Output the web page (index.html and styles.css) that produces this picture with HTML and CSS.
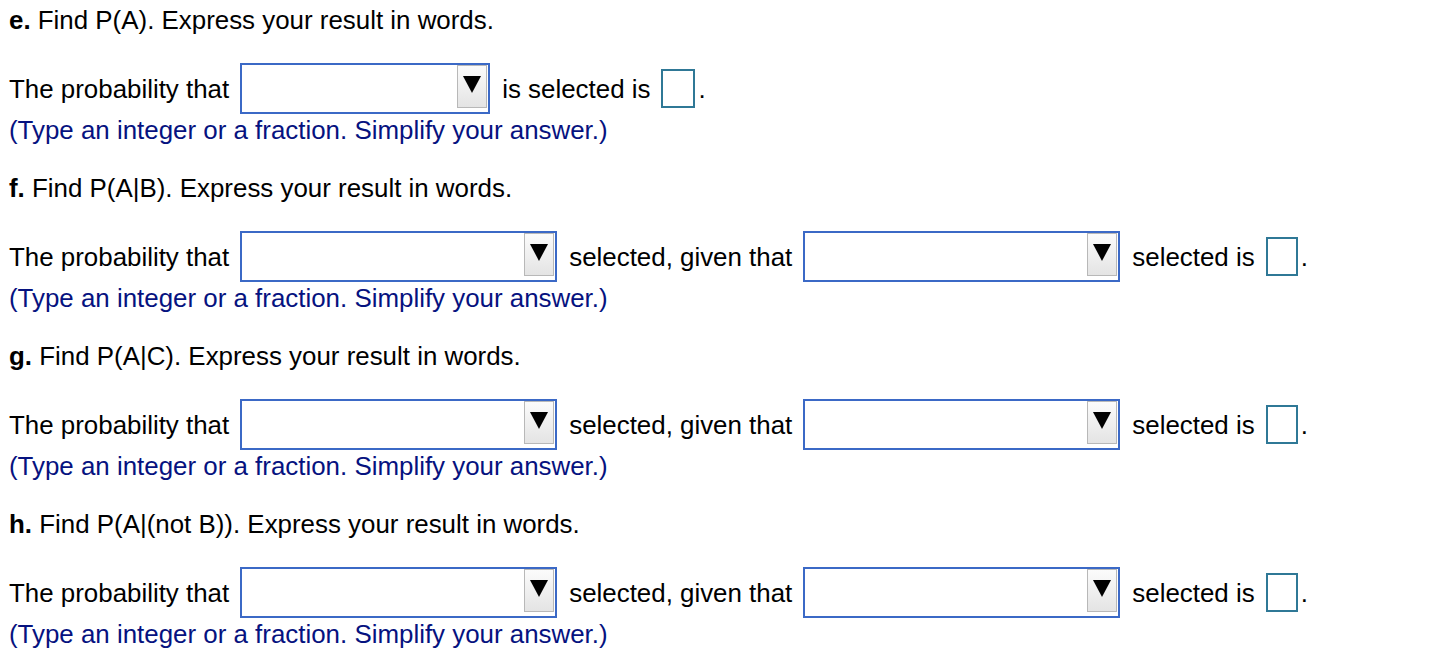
FILE: index.html
```html
<!DOCTYPE html>
<html>
<head>
<meta charset="utf-8">
<link rel="stylesheet" href="styles.css">
</head>
<body>
<div class="page">
  <section class="part">
    <div class="heading"><b>e.</b> Find P(A). Express your result in words.</div>
    <div class="row">
      <span>The probability that</span>
      <div class="dropdown w-e"><span class="btn"><svg width="18" height="18" viewBox="0 0 18 18"><polygon points="0,1 18,1 9,18" fill="#000"/></svg></span></div>
      <span>is selected is</span>
      <span class="ans"><span class="box wide"></span>.</span>
    </div>
    <div class="hint">(Type an integer or a fraction. Simplify your answer.)</div>
  </section>

  <section class="part">
    <div class="heading"><b>f.</b> Find P(A|B). Express your result in words.</div>
    <div class="row">
      <span>The probability that</span>
      <div class="dropdown w-f"><span class="btn"><svg width="18" height="18" viewBox="0 0 18 18"><polygon points="0,1 18,1 9,18" fill="#000"/></svg></span></div>
      <span>selected, given that</span>
      <div class="dropdown w-f"><span class="btn"><svg width="18" height="18" viewBox="0 0 18 18"><polygon points="0,1 18,1 9,18" fill="#000"/></svg></span></div>
      <span>selected is</span>
      <span class="ans"><span class="box"></span>.</span>
    </div>
    <div class="hint">(Type an integer or a fraction. Simplify your answer.)</div>
  </section>

  <section class="part">
    <div class="heading"><b>g.</b> Find P(A|C). Express your result in words.</div>
    <div class="row">
      <span>The probability that</span>
      <div class="dropdown w-f"><span class="btn"><svg width="18" height="18" viewBox="0 0 18 18"><polygon points="0,1 18,1 9,18" fill="#000"/></svg></span></div>
      <span>selected, given that</span>
      <div class="dropdown w-f"><span class="btn"><svg width="18" height="18" viewBox="0 0 18 18"><polygon points="0,1 18,1 9,18" fill="#000"/></svg></span></div>
      <span>selected is</span>
      <span class="ans"><span class="box"></span>.</span>
    </div>
    <div class="hint">(Type an integer or a fraction. Simplify your answer.)</div>
  </section>

  <section class="part">
    <div class="heading"><b>h.</b> Find P(A|(not B)). Express your result in words.</div>
    <div class="row">
      <span>The probability that</span>
      <div class="dropdown w-f"><span class="btn"><svg width="18" height="18" viewBox="0 0 18 18"><polygon points="0,1 18,1 9,18" fill="#000"/></svg></span></div>
      <span>selected, given that</span>
      <div class="dropdown w-f"><span class="btn"><svg width="18" height="18" viewBox="0 0 18 18"><polygon points="0,1 18,1 9,18" fill="#000"/></svg></span></div>
      <span>selected is</span>
      <span class="ans"><span class="box"></span>.</span>
    </div>
    <div class="hint">(Type an integer or a fraction. Simplify your answer.)</div>
  </section>
</div>
</body>
</html>
```
FILE: styles.css
```css
html, body {
  margin: 0;
  padding: 0;
  background: #fff;
}
.page {
  padding: 5px 0 0 9px;
  font-family: "Liberation Sans", Arial, Helvetica, sans-serif;
  font-size: 25.9px;
  line-height: 30px;
  color: #000;
}
.part {
  margin-bottom: 28px;
}
.heading {
  height: 30px;
  margin-bottom: 28px;
  white-space: nowrap;
}
.row {
  display: flex;
  align-items: center;
  gap: 11px;
  height: 51px;
  white-space: nowrap;
}
.dropdown {
  box-sizing: border-box;
  height: 51px;
  border: 2px solid #3b69c6;
  background: #fff;
  display: flex;
  justify-content: flex-end;
  align-items: flex-start;
  padding-right: 1px;
  margin-right: 1px;
}
.w-e { width: 250px; }
.w-f { width: 317px; }
.btn {
  box-sizing: border-box;
  width: 30px;
  height: 43px;
  border: 1px solid #b8b8b8;
  background: linear-gradient(#fbfbfb, #e4e4e4);
  display: flex;
  align-items: center;
  justify-content: center;
  padding-bottom: 6px;
}
.btn svg {
  display: block;
}
.ans {
  display: flex;
  align-items: center;
  gap: 3px;
}
.box {
  box-sizing: border-box;
  display: block;
  width: 32px;
  height: 39px;
  border: 2px solid #2f7896;
}
.box.wide {
  width: 34px;
}
.hint {
  margin-top: 1px;
  height: 30px;
  color: #06127f;
  white-space: nowrap;
}
```
